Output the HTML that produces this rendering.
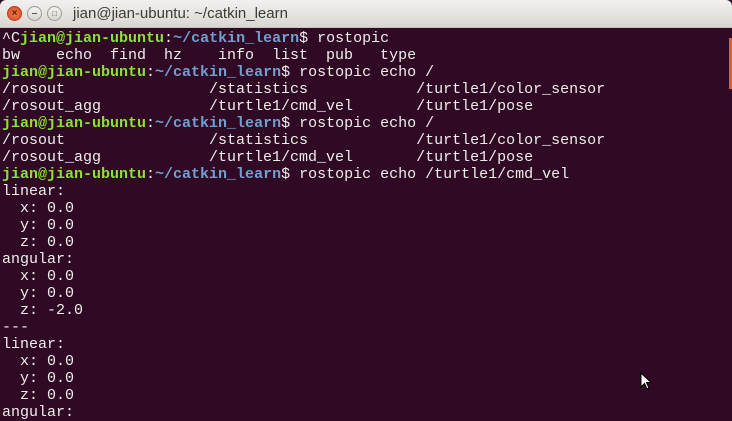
<!DOCTYPE html>
<html><head><meta charset="utf-8"><style>
html,body{margin:0;padding:0;width:732px;height:421px;overflow:hidden;background:#300a24}
.tb{position:absolute;left:0;top:0;width:732px;height:28px;background:linear-gradient(#f2f1ef,#dad7d1);border-radius:6px 6px 0 0;border-bottom:1px solid #c8c4bc;box-sizing:border-box}
.btn{position:absolute;top:6px;width:15px;height:15px;border-radius:50%;box-sizing:border-box;font:bold 10px "Liberation Sans",sans-serif;text-align:center;line-height:14px}
.t{position:absolute;left:73px;top:5px;font:15px "Liberation Sans","DejaVu Sans",sans-serif;color:#3c3b37}
pre{position:absolute;left:2px;top:30px;margin:0;font:15px/17px "Liberation Mono","DejaVu Sans Mono",monospace;color:#eeeeec;white-space:pre}
.g{color:#8ae234;font-weight:bold}.b{color:#729fcf;font-weight:bold}
.sb{position:absolute;left:729px;top:38px;width:3px;height:51px;background:#d0643c}
</style></head><body>
<div class="tb">
<div class="btn" style="left:7px;background:radial-gradient(#f07c52,#d9471b);border:1px solid #b5401c;color:#5a1a06">×</div>
<div class="btn" style="left:27px;background:linear-gradient(#f5f4f2,#d8d5cf);border:1px solid #9e9a93;color:#555">–</div>
<div class="btn" style="left:47px;background:linear-gradient(#f5f4f2,#d8d5cf);border:1px solid #9e9a93;color:#555;font-size:8px">□</div>
<div class="t">jian@jian-ubuntu: ~/catkin_learn</div>
</div>
<pre>^C<span class="g">jian@jian-ubuntu</span>:<span class="b">~/catkin_learn</span>$ rostopic
bw    echo  find  hz    info  list  pub   type
<span class="g">jian@jian-ubuntu</span>:<span class="b">~/catkin_learn</span>$ rostopic echo /
/rosout                /statistics            /turtle1/color_sensor
/rosout_agg            /turtle1/cmd_vel       /turtle1/pose
<span class="g">jian@jian-ubuntu</span>:<span class="b">~/catkin_learn</span>$ rostopic echo /
/rosout                /statistics            /turtle1/color_sensor
/rosout_agg            /turtle1/cmd_vel       /turtle1/pose
<span class="g">jian@jian-ubuntu</span>:<span class="b">~/catkin_learn</span>$ rostopic echo /turtle1/cmd_vel
linear: 
  x: 0.0
  y: 0.0
  z: 0.0
angular: 
  x: 0.0
  y: 0.0
  z: -2.0
---
linear: 
  x: 0.0
  y: 0.0
  z: 0.0
angular: </pre>
<div class="sb"></div>
<svg style="position:absolute;left:640px;top:372px" width="12" height="19" viewBox="0 0 12 19"><path d="M1 1 L1 15 L4.5 11.5 L7 17 L9 16 L6.5 10.5 L11 10.5 Z" fill="#fff" stroke="#000" stroke-width="1"/></svg>
</body></html>
